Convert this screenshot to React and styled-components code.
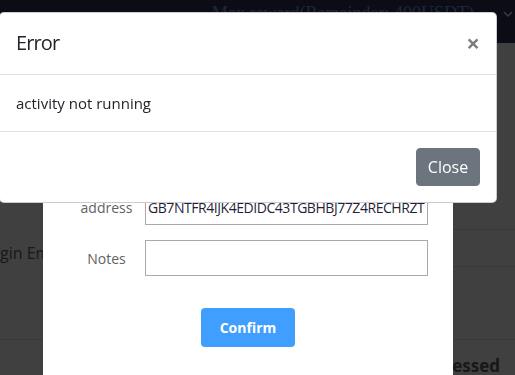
import React from 'react';
import styled, { createGlobalStyle } from 'styled-components';

const GlobalStyle = createGlobalStyle`
    html, body {
        margin: 0;
        padding: 0;
        background: #ffffff;
        overflow: hidden;
    }
    body {
        font-family: "Open Sans", "Noto Sans", sans-serif;
        color: #212529;
    }
    * {
        box-sizing: border-box;
    }
`;

// Page behind the dialogs
const Page = styled.div`
    width: 515px;
    height: 375px;
    overflow: hidden;
`;

const Navbar = styled.div`
    height: 43px;
    background: #2c3058;
    display: flex;
    align-items: flex-start;
    padding: 3px 0 0 212px;
`;

const NavTitle = styled.div`
    font-family: "Liberation Serif", serif;
    font-size: 18px;
    color: #6f9cf5;
    white-space: nowrap;
`;

const NavChevron = styled.div`
    margin-left: auto;
    padding: 8px 2px 0 0;
    display: flex;
`;

const Row = styled.div`
    display: flex;
    height: ${({ $h }) => $h}px;
`;

const Cell = styled.div`
    flex: 1;
    display: flex;
    align-items: center;
    justify-content: ${({ $end }) => ($end ? 'flex-end' : 'flex-start')};
    padding: 0 15px 0 0;
    border-bottom: ${({ $line }) => ($line ? '1px solid #dcdfe6' : 'none')};
    font-size: ${({ $bold }) => ($bold ? 17 : 16)}px;
    color: #606266;
    font-weight: ${({ $bold }) => ($bold ? 700 : 400)};
    white-space: nowrap;
`;

const CroppedText = styled.span`
    text-indent: -18px;
    display: block;
    padding-top: 8px;
`;

const Backdrop = styled.div`
    position: fixed;
    inset: 0;
    background: rgba(0, 0, 0, 0.75);
`;

// Withdraw form dialog
const FormModal = styled.div`
    position: fixed;
    top: 100px;
    left: 43px;
    width: 410px;
    height: 320px;
    background: #ffffff;
    border-radius: 2px;
    padding-top: 89px;
`;

const Form = styled.div`
    display: grid;
    grid-template-columns: 77px 283px;
    row-gap: 15px;
    padding: 0 25px;
    align-items: center;
`;

const Label = styled.label`
    font-size: 14px;
    color: #606266;
    text-align: center;
`;

const Input = styled.input`
    height: 36px;
    width: 100%;
    border: 1px solid #aaaaaa;
    border-radius: 0;
    padding: 0 2px;
    font-family: "Open Sans", "Noto Sans", sans-serif;
    font-size: 14px;
    letter-spacing: -0.45px;
    color: #1f1f3a;
    background: #fff;
    outline: none;
`;

const Actions = styled.div`
    display: flex;
    justify-content: center;
    padding-top: 32px;
`;

const PrimaryButton = styled.button`
    width: 94px;
    height: 39px;
    border: none;
    border-radius: 4px;
    background: #409eff;
    color: #ffffff;
    font-family: "Open Sans", "Noto Sans", sans-serif;
    font-size: 14px;
    font-weight: 700;
`;

// Bootstrap style error dialog
const ErrorModal = styled.div`
    position: fixed;
    top: 12px;
    left: -1px;
    width: 498px;
    background: #ffffff;
    border: 1px solid rgba(0, 0, 0, 0.2);
    border-radius: 5px;
    display: flex;
    flex-direction: column;
`;

const ModalHeader = styled.div`
    display: flex;
    align-items: flex-start;
    padding: 15px 16px 16px;
    border-bottom: 1px solid #dee2e6;
`;

const ModalTitle = styled.h5`
    margin: 0;
    font-size: 20px;
    font-weight: 500;
    letter-spacing: -0.9px;
    line-height: 30px;
    color: #212529;
`;

const CloseX = styled.button`
    margin: -16px -16px -16px auto;
    padding: 16px;
    background: transparent;
    border: none;
    font-family: "Open Sans", "Noto Sans", sans-serif;
    font-size: 24px;
    font-weight: 700;
    line-height: 30px;
    color: #000;
    opacity: 0.5;
`;

const ModalBody = styled.div`
    padding: 16px;
    font-size: 15px;
    line-height: 24px;
    color: #212529;
`;

const ModalFooter = styled.div`
    display: flex;
    justify-content: flex-end;
    padding: 12px;
    border-top: 1px solid #dee2e6;
`;

const SecondaryButton = styled.button`
    margin: 4px;
    height: 38px;
    width: 64px;
    border: 1px solid #6c757d;
    border-radius: 4px;
    background: #6c757d;
    color: #ffffff;
    font-family: "Open Sans", "Noto Sans", sans-serif;
    font-size: 16px;
    line-height: 24px;
`;

const App = () => {
    return (
        <>
            <GlobalStyle />
            <Page>
                <Navbar>
                    <NavTitle>Max reward(Remainder: 400USDT)</NavTitle>
                    <NavChevron>
                        <svg width="10" height="7" viewBox="0 0 10 7">
                            <path d="M1 1l4 4 4-4" fill="none" stroke="#e6e6e6" strokeWidth="1.4" />
                        </svg>
                    </NavChevron>
                </Navbar>
                <Row $h={187}>
                    <Cell />
                    <Cell $line />
                </Row>
                <Row $h={37}>
                    <Cell>
                        <CroppedText>Login Email</CroppedText>
                    </Cell>
                    <Cell $line />
                </Row>
                <Row $h={73}>
                    <Cell $line />
                    <Cell $line />
                </Row>
                <Row $h={50}>
                    <Cell />
                    <Cell $end $bold>Successed</Cell>
                </Row>
            </Page>

            <Backdrop />

            <FormModal>
                <Form>
                    <Label>address</Label>
                    <Input readOnly value="GB7NTFR4IJK4EDIDC43TGBHBJ77Z4RECHRZT" />
                    <Label>Notes</Label>
                    <Input readOnly value="" />
                </Form>
                <Actions>
                    <PrimaryButton>Confirm</PrimaryButton>
                </Actions>
            </FormModal>

            <ErrorModal>
                <ModalHeader>
                    <ModalTitle>Error</ModalTitle>
                    <CloseX>×</CloseX>
                </ModalHeader>
                <ModalBody>activity not running</ModalBody>
                <ModalFooter>
                    <SecondaryButton>Close</SecondaryButton>
                </ModalFooter>
            </ErrorModal>
        </>
    );
};

export default App;
